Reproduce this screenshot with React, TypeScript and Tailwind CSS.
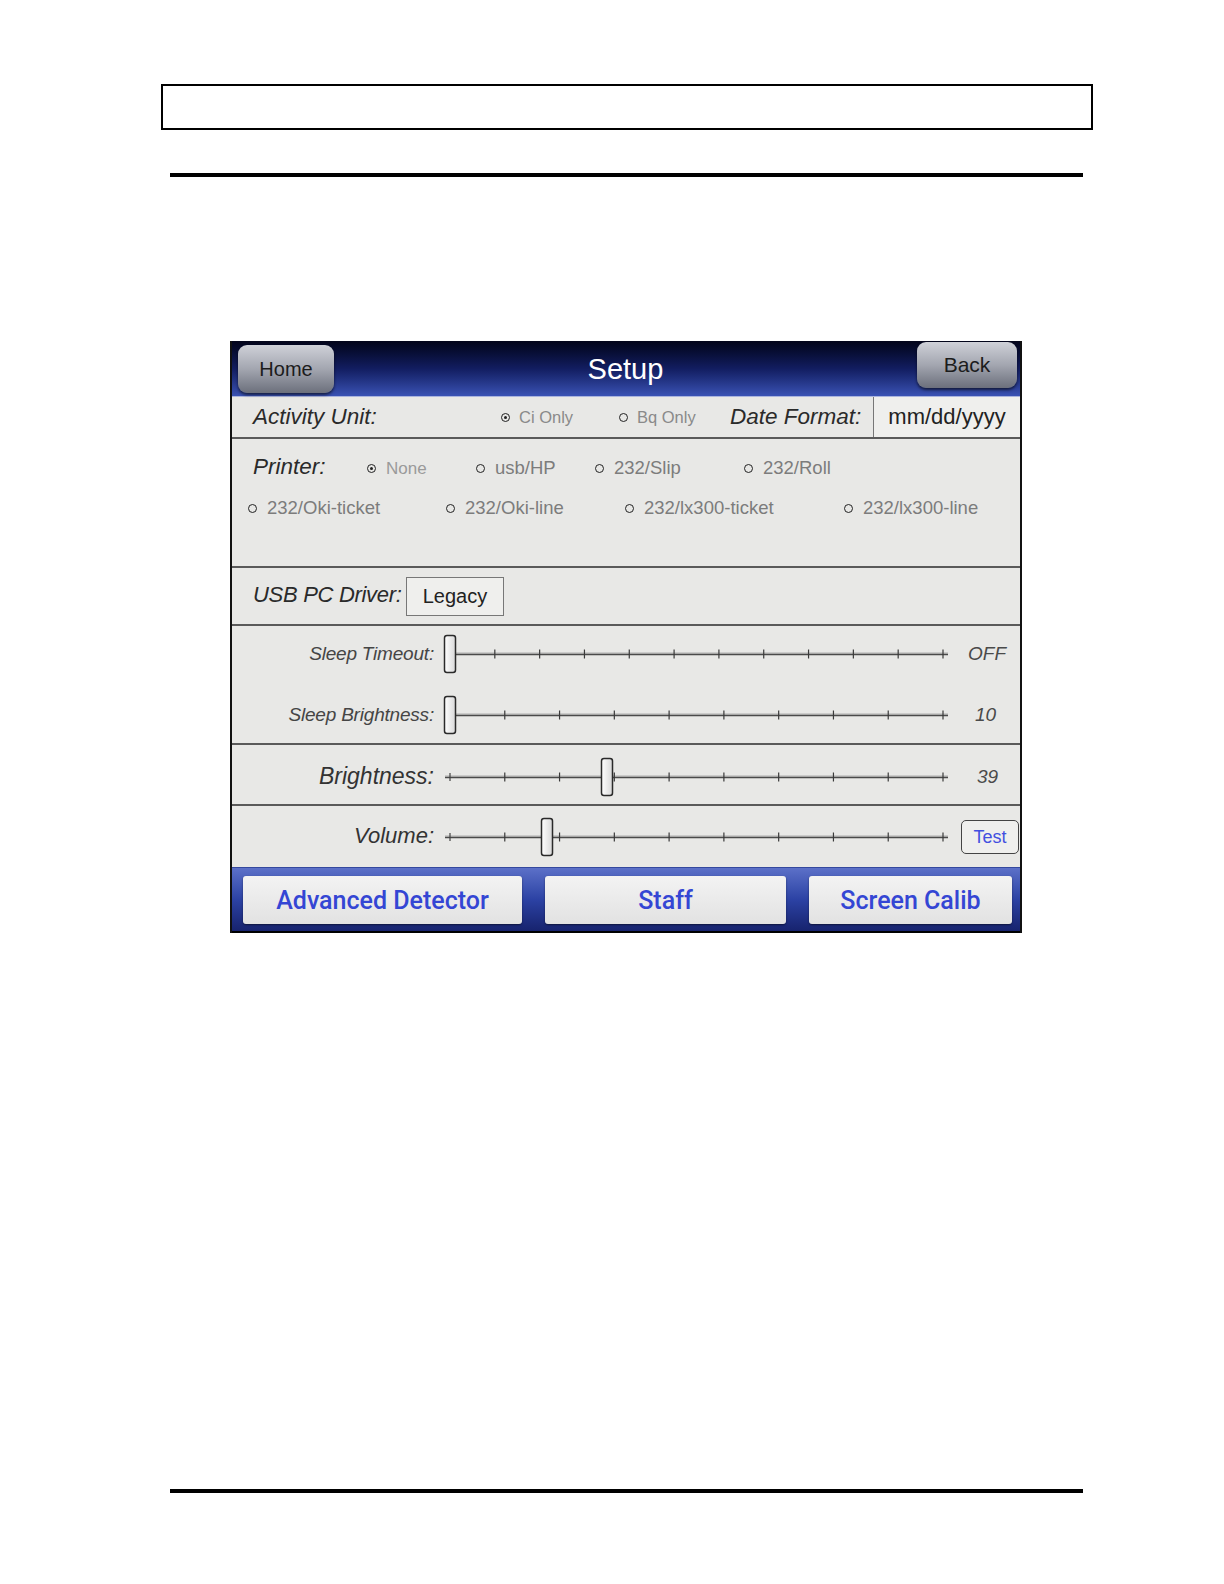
import React from "react";

const SANS = "font-['Liberation_Sans',Arial,sans-serif]";

function Radio({ label, selected, textClass, gap = "gap-[10px]" }: { label: string; selected?: boolean; textClass: string; gap?: string }) {
  return (
    <div className={`flex items-center whitespace-nowrap ${gap}`}>
      <span className="w-[9px] h-[9px] rounded-full border-[1.75px] border-[#222] flex items-center justify-center shrink-0">
        {selected && <span className="w-[3px] h-[3px] rounded-full bg-[#222]" />}
      </span>
      <span className={textClass}>{label}</span>
    </div>
  );
}

function Slider({ n, thumb, startPlus }: { n: number; thumb: number; startPlus?: boolean }) {
  const W = 510;
  const H = 40;
  const x0 = 8;
  const x1 = 501;
  const cy = 20;
  const step = (x1 - x0) / n;
  const ticks: number[] = [];
  for (let i = 1; i <= n; i++) ticks.push(x0 + i * step);
  return (
    <svg width={W} height={H} viewBox={`0 0 ${W} ${H}`} className="shrink-0">
      <defs>
        <linearGradient id={`thumbg-${n}-${thumb}`} x1="0" y1="0" x2="1" y2="0">
          <stop offset="0" stopColor="#ffffff" />
          <stop offset="1" stopColor="#d8d8d8" />
        </linearGradient>
      </defs>
      <line x1={startPlus ? x0 - 5 : x0} y1={cy - 0.8} x2={x1 + 5} y2={cy - 0.8} stroke="#8a8a8a" strokeWidth="1" />
      <line x1={startPlus ? x0 - 5 : x0} y1={cy + 0.6} x2={x1 + 5} y2={cy + 0.6} stroke="#4a4a4a" strokeWidth="1.4" />
      {startPlus && <line x1={x0} y1={cy - 4} x2={x0} y2={cy + 4} stroke="#444" strokeWidth="1.2" />}
      {ticks.map((t, i) => (
        <line key={i} x1={t} y1={cy - 4.5} x2={t} y2={cy + 4.5} stroke="#3a3a3a" strokeWidth="1.2" />
      ))}
      <rect
        x={thumb - 5.5}
        y={cy - 18.5}
        width="11"
        height="37"
        rx="2.5"
        fill={`url(#thumbg-${n}-${thumb})`}
        stroke="#2a2a2a"
        strokeWidth="1.5"
      />
    </svg>
  );
}

export default function App() {
  const radioAct = `${SANS} text-[16.5px] text-[#8a8a8a] leading-none`;
  const radioPr = `${SANS} text-[18.5px] text-[#7c7c7c] leading-none`;
  const italicLbl = `${SANS} italic text-[22.5px] text-[#2a2a2a] leading-none whitespace-nowrap`;
  const sliderLbl = `${SANS} italic text-[19px] text-[#454545] leading-none tracking-[-0.2px] whitespace-nowrap`;
  const valueLbl = `${SANS} italic text-[19px] text-[#4a4a4a] leading-none`;

  return (
    <div className="w-[1224px] h-[1584px] bg-white pt-[84px]">
      <div className="ml-[161px] w-[932px] h-[46px] border-2 border-black" />
      <div className="mt-[43px] ml-[170px] w-[913px] h-[4px] bg-black" />

      <div className="mt-[164px] ml-[230px] w-[792px] h-[592px] border-x-2 border-[#111] flex flex-col bg-[#e8e8e6]">
        {/* Header */}
        <div className="h-[56px] shrink-0 flex justify-between bg-linear-to-b from-[#03051a] via-[#121d60] to-[#3a52b4] border-b border-[#aab4de] pl-[6px] pr-[3px]">
          <div className="mt-[4px] w-[96px] h-[48px] rounded-[9px] bg-linear-to-b from-[#cfd1d8] via-[#a3a6b0] to-[#6c707c] shadow-[0_2px_3px_rgba(0,0,0,0.6)] flex items-center justify-center">
            <span className={`${SANS} text-[20px] text-[#1c1c1c]`}>Home</span>
          </div>
          <div className="flex items-center pt-[2px]">
            <span className={`${SANS} text-[29px] text-white leading-none`}>Setup</span>
          </div>
          <div className="mt-[1px] w-[100px] h-[46px] rounded-[9px] bg-linear-to-b from-[#cfd1d8] via-[#a3a6b0] to-[#6c707c] shadow-[0_2px_3px_rgba(0,0,0,0.6)] flex items-center justify-center">
            <span className={`${SANS} text-[21px] text-[#1c1c1c]`}>Back</span>
          </div>
        </div>

        {/* Activity Unit row */}
        <div className="h-[42px] shrink-0 flex items-stretch border-b-2 border-[#5a5a5a]">
          <div className="w-[269px] shrink-0 pl-[21px] flex items-center">
            <span className={italicLbl}>Activity Unit:</span>
          </div>
          <div className="w-[118px] shrink-0 flex items-center">
            <Radio label="Ci Only" selected textClass={radioAct} gap="gap-[9px]" />
          </div>
          <div className="w-[111px] shrink-0 flex items-center">
            <Radio label="Bq Only" textClass={radioAct} gap="gap-[9px]" />
          </div>
          <div className="w-[143px] shrink-0 flex items-center">
            <span className={italicLbl}>Date Format:</span>
          </div>
          <div className="flex-1 flex items-center justify-center border-l border-[#777] bg-[#efefed]">
            <span className={`${SANS} text-[22px] text-[#222] leading-none`}>mm/dd/yyyy</span>
          </div>
        </div>

        {/* Printer row */}
        <div className="h-[129px] shrink-0 border-b-2 border-[#5a5a5a] pt-[17px]">
          <div className="h-[24px] flex items-center pl-[21px]">
            <div className="w-[114px] shrink-0">
              <span className={italicLbl}>Printer:</span>
            </div>
            <div className="w-[109px] shrink-0">
              <Radio label="None" selected textClass={`${SANS} text-[17px] text-[#9a9a9a] leading-none`} />
            </div>
            <div className="w-[119px] shrink-0">
              <Radio label="usb/HP" textClass={radioPr} />
            </div>
            <div className="w-[149px] shrink-0">
              <Radio label="232/Slip" textClass={radioPr} />
            </div>
            <div>
              <Radio label="232/Roll" textClass={radioPr} />
            </div>
          </div>
          <div className="mt-[16px] h-[24px] flex items-center pl-[16px]">
            <div className="w-[198px] shrink-0">
              <Radio label="232/Oki-ticket" textClass={radioPr} />
            </div>
            <div className="w-[179px] shrink-0">
              <Radio label="232/Oki-line" textClass={radioPr} />
            </div>
            <div className="w-[219px] shrink-0">
              <Radio label="232/lx300-ticket" textClass={radioPr} />
            </div>
            <div>
              <Radio label="232/lx300-line" textClass={radioPr} />
            </div>
          </div>
        </div>

        {/* USB PC Driver row */}
        <div className="h-[58px] shrink-0 border-b-2 border-[#5a5a5a] flex items-center">
          <div className="w-[174px] shrink-0 pl-[21px] whitespace-nowrap">
            <span className={`${SANS} italic text-[22px] text-[#2a2a2a] leading-none whitespace-nowrap tracking-[-0.3px]`}>USB PC Driver:</span>
          </div>
          <div className="w-[98px] h-[39px] border border-[#777] bg-[#efefed] flex items-center justify-center">
            <span className={`${SANS} text-[20px] text-[#222] leading-none`}>Legacy</span>
          </div>
        </div>

        {/* Sleep section */}
        <div className="h-[119px] shrink-0 border-b-2 border-[#5a5a5a] pt-[8px]">
          <div className="h-[40px] flex items-center">
            <div className="w-[202px] shrink-0 text-right">
              <span className={sliderLbl}>Sleep Timeout:</span>
            </div>
            <div className="ml-[8px]">
              <Slider n={11} thumb={8} />
            </div>
            <div className="ml-[16px]">
              <span className={valueLbl}>OFF</span>
            </div>
          </div>
          <div className="mt-[21px] h-[40px] flex items-center">
            <div className="w-[202px] shrink-0 text-right">
              <span className={sliderLbl}>Sleep Brightness:</span>
            </div>
            <div className="ml-[8px]">
              <Slider n={9} thumb={8} />
            </div>
            <div className="ml-[23px]">
              <span className={valueLbl}>10</span>
            </div>
          </div>
        </div>

        {/* Brightness */}
        <div className="h-[61px] shrink-0 border-b-2 border-[#5a5a5a] pt-[5px] flex items-center">
          <div className="w-[202px] shrink-0 text-right">
            <span className={`${SANS} italic text-[23px] text-[#333] leading-none whitespace-nowrap`}>Brightness:</span>
          </div>
          <div className="ml-[8px]">
            <Slider n={9} thumb={165} startPlus />
          </div>
          <div className="ml-[25px]">
            <span className={valueLbl}>39</span>
          </div>
        </div>

        {/* Volume */}
        <div className="h-[61px] shrink-0 pt-[1px] flex items-center">
          <div className="w-[202px] shrink-0 text-right">
            <span className={`${SANS} italic text-[22px] text-[#333] leading-none whitespace-nowrap`}>Volume:</span>
          </div>
          <div className="ml-[8px]">
            <Slider n={9} thumb={105} startPlus />
          </div>
          <div className="ml-[9px] w-[58px] h-[34px] rounded-[5px] border border-[#444] bg-[#efefed] flex items-center justify-center">
            <span className={`${SANS} text-[18px] text-[#4250e0] leading-none`}>Test</span>
          </div>
        </div>

        {/* Bottom bar */}
        <div className="flex-1 flex items-start pt-[8px] pl-[11px] gap-[23px] bg-linear-to-b from-[#5c70c8] via-[#2c42a4] to-[#17236e] border-t border-[#34489e] border-b-2 border-b-black">
          <div className="w-[279px] h-[48px] rounded-[3px] bg-linear-to-b from-[#f3f3f3] to-[#e2e2e2] shadow-[0_1px_2px_rgba(0,0,0,0.5)] flex items-center justify-center">
            <span className="font-['Roboto',sans-serif] font-medium text-[25px] text-[#3446d4] leading-none">Advanced Detector</span>
          </div>
          <div className="w-[241px] h-[48px] rounded-[3px] bg-linear-to-b from-[#f3f3f3] to-[#e2e2e2] shadow-[0_1px_2px_rgba(0,0,0,0.5)] flex items-center justify-center">
            <span className="font-['Roboto',sans-serif] font-medium text-[25px] text-[#3446d4] leading-none">Staff</span>
          </div>
          <div className="w-[203px] h-[48px] rounded-[3px] bg-linear-to-b from-[#f3f3f3] to-[#e2e2e2] shadow-[0_1px_2px_rgba(0,0,0,0.5)] flex items-center justify-center">
            <span className="font-['Roboto',sans-serif] font-medium text-[25px] text-[#3446d4] leading-none">Screen Calib</span>
          </div>
        </div>
      </div>

      <div className="mt-[556px] ml-[170px] w-[913px] h-[4px] bg-black" />
    </div>
  );
}
